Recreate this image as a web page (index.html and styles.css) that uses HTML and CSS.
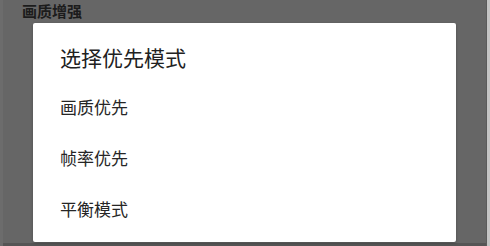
FILE: index.html
```html
<!DOCTYPE html>
<html lang="zh">
<head>
<meta charset="utf-8">
<link rel="stylesheet" href="styles.css">
</head>
<body>
<div class="screen">
  <div class="edge-left"></div>
  <div class="main">
    <div class="page-title">画质增强</div>
    <div class="page-body"></div>
    <div class="page-foot"></div>
  </div>
  <div class="edge-line"></div>
  <div class="edge-right"></div>
</div>
<div class="dialog" role="dialog">
  <div class="dialog-title">选择优先模式</div>
  <ul class="options">
    <li class="option">画质优先</li>
    <li class="option">帧率优先</li>
    <li class="option">平衡模式</li>
  </ul>
</div>
</body>
</html>
```
FILE: styles.css
```css
html, body {
  margin: 0;
  padding: 0;
  width: 490px;
  height: 246px;
  overflow: hidden;
  font-family: "Noto Sans CJK SC", "Noto Sans", sans-serif;
}
.screen {
  display: flex;
  width: 490px;
  height: 246px;
  background: #666666;
}
.edge-left {
  width: 3px;
  background: #6c6c6c;
}
.main {
  flex: 1;
  display: flex;
  flex-direction: column;
}
.page-title {
  height: 21px;
  line-height: 21px;
  padding-left: 19px;
  font-size: 15px;
  font-weight: bold;
  color: #1c1c1c;
}
.page-body {
  flex: 1;
}
.page-foot {
  height: 3px;
  background: #555555;
}
.edge-line {
  width: 1px;
  background: #5b5b5b;
}
.edge-right {
  width: 3px;
  background: #c4c4c4;
}
.dialog {
  position: absolute;
  left: 33px;
  top: 23px;
  width: 423px;
  height: 219px;
  box-sizing: border-box;
  padding: 18px 0 6px 27px;
  background: #ffffff;
  border-radius: 2px;
  box-shadow: 0 1px 3px rgba(0,0,0,0.25);
}
.dialog-title {
  height: 32px;
  line-height: 32px;
  font-size: 21px;
  color: #212121;
  margin-bottom: 8px;
}
.options {
  list-style: none;
  margin: 0;
  padding: 0;
}
.option {
  height: 51px;
  line-height: 51px;
  font-size: 17px;
  color: #262626;
}
```
